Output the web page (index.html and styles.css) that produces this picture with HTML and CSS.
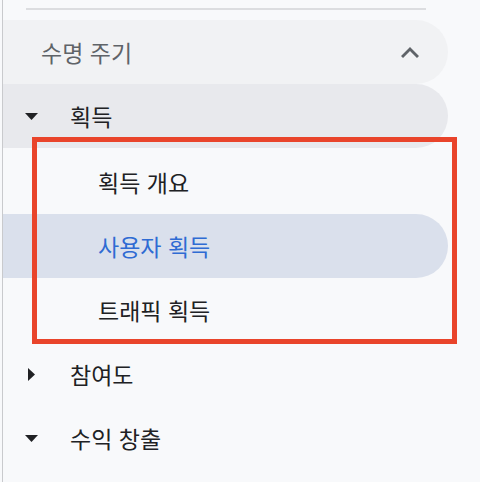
FILE: index.html
```html
<!DOCTYPE html>
<html lang="ko">
<head>
<meta charset="UTF-8" />
<title>보고서 탐색</title>
<link rel="stylesheet" href="styles.css">
</head>
<body>

<nav class="sidebar">
    <div class="divider"></div>

    <!-- section header -->
    <div class="row section">
        <span class="label">수명 주기</span>
        <svg class="chevron" viewBox="0 0 18 11" width="18" height="11">
            <path d="M9 0 0 9l2 2 7-7 7 7 2-2z" fill="#5f6368"/>
        </svg>
    </div>

    <!-- acquisition group -->
    <div class="row group open">
        <svg class="caret" viewBox="0 0 13 7" width="13" height="7"><path d="M0 0h13L6.5 7z"/></svg>
        <span class="label">획득</span>
    </div>
    <div class="sub">
        <div class="row item"><span class="label">획득 개요</span></div>
        <div class="row item active"><span class="label">사용자 획득</span></div>
        <div class="row item"><span class="label">트래픽 획득</span></div>
    </div>

    <div class="row group">
        <svg class="caret" viewBox="0 0 13 13" width="13" height="13"><path d="M3 0v13l7-6.5z"/></svg>
        <span class="label">참여도</span>
    </div>
    <div class="row group">
        <svg class="caret" viewBox="0 0 13 7" width="13" height="7"><path d="M0 0h13L6.5 7z"/></svg>
        <span class="label">수익 창출</span>
    </div>

    <!-- annotation box -->
    <div class="highlight"></div>
</nav>

</body>
</html>
```

FILE: styles.css
```css
/* --- Layout --------------------------------------------------------- */
body{
    margin:0;
    background:#f8f9fb;
    font-family:"Noto Sans CJK KR","Noto Sans",sans-serif;
    padding-left:2px;
    height:482px;
    overflow:hidden;
}
.sidebar{
    position:relative;
    border-left:1px solid #c9cacd;
    padding-top:8px;
    height:474px;
}
.divider{
    margin-left:23px;
    width:400px;
    height:2px;
    background:#dcdde0;
}

/* --- Rows ----------------------------------------------------------- */
.row{
    display:flex;
    align-items:center;
    width:445px;
    height:64px;
    box-sizing:border-box;
    border-radius:0 32px 32px 0;
    font-size:23px;
    color:#202124;
}
.section{
    margin-top:10px;
    background:#f1f2f4;
    padding:0 29px 0 38px;
    justify-content:space-between;
    color:#5f6368;
}
.group{ padding-left:22px; }
.group.open{ background:#e8e9ed; }
.caret{
    width:13px;
    fill:#202124;
    margin-right:32px;
    flex:none;
}
.sub{ padding-top:2px; }
.item{ padding-left:95px; }
.item.active{
    background:#dae0ec;
    color:#2f6bd3;
}

/* --- Annotation ----------------------------------------------------- */
.highlight{
    position:absolute;
    left:29px;
    top:137px;
    width:415px;
    height:197px;
    border:5px solid #e9442b;
}
```
